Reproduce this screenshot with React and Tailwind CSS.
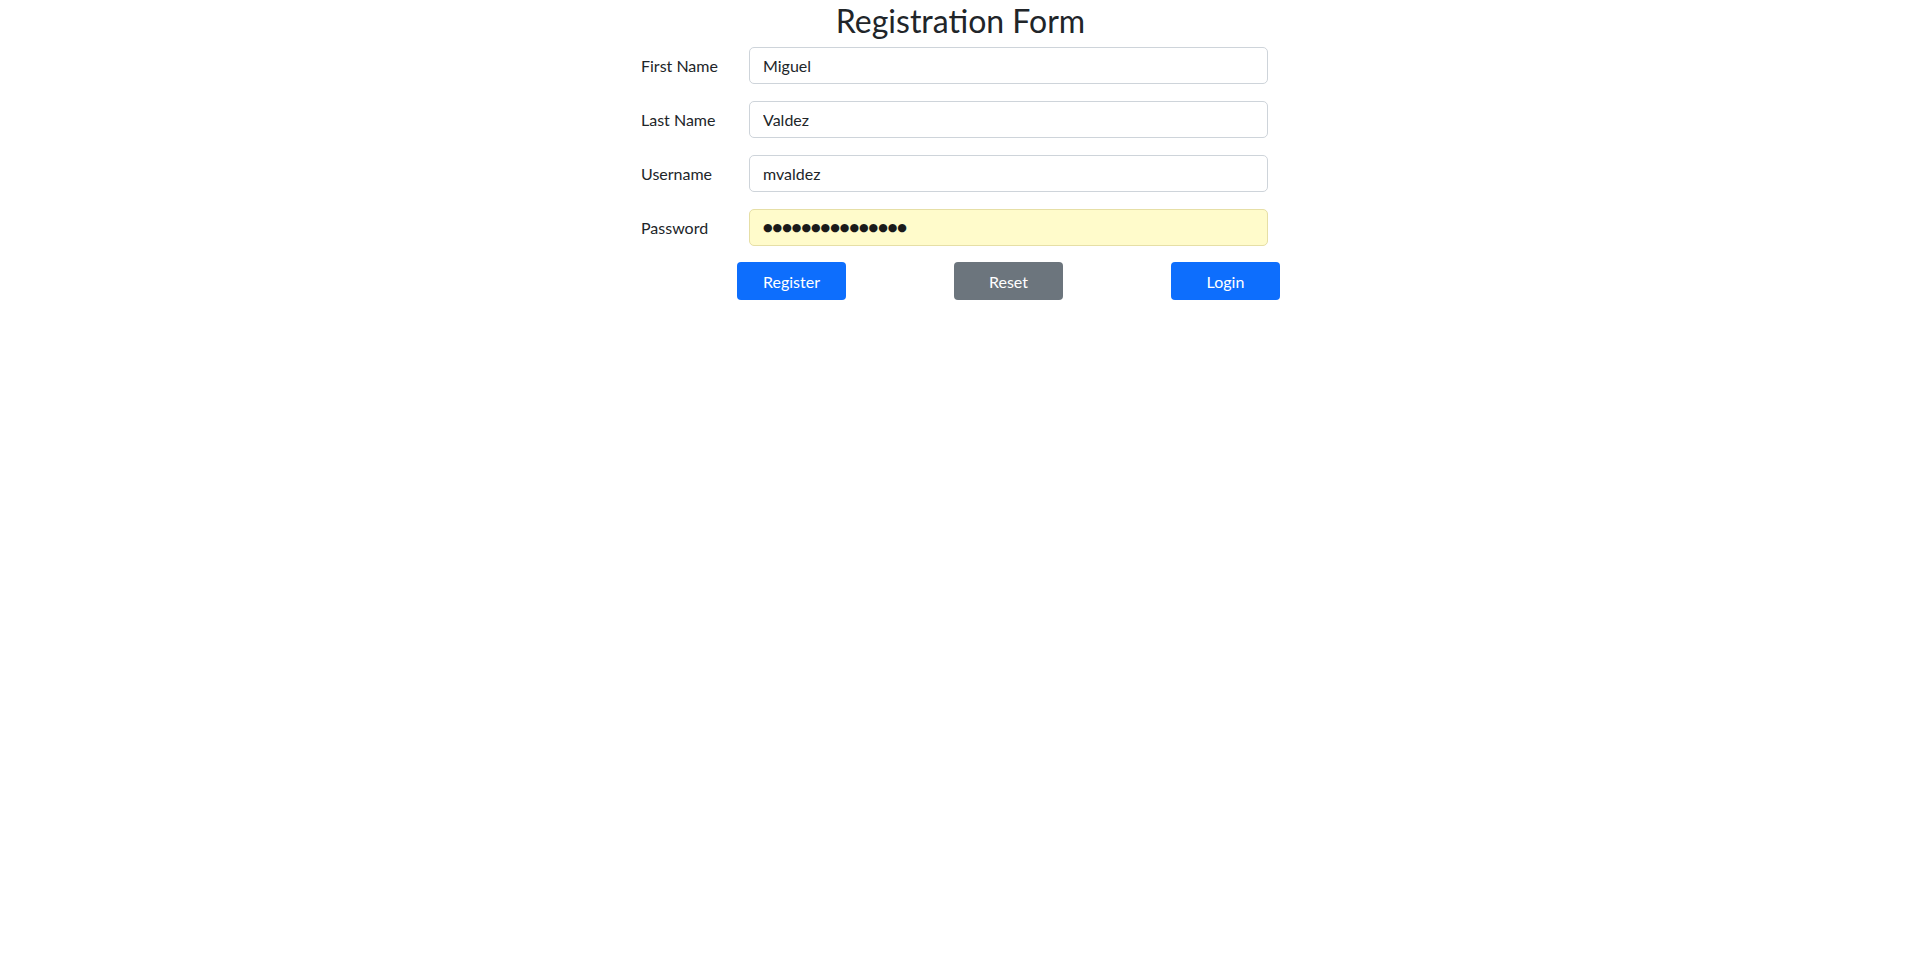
import React, { useState } from "react";

const label = "w-[108px] shrink-0 text-[16px] text-[#212529]";
const input =
  "h-[37px] w-[519px] rounded-[5px] border border-[#ced4da] bg-white px-[13px] text-[16px] text-[#212529] outline-none";
const btn = "h-[38px] w-[109px] rounded-[4px] text-[16px] text-white pt-[1px]";

export default function App() {
  const [form, setForm] = useState({
    first: "Miguel",
    last: "Valdez",
    user: "mvaldez",
    pass: "secretpassword1",
  });

  const onChange = (e) =>
    setForm((f) => ({ ...f, [e.target.name]: e.target.value }));

  const rows = [
    { name: "first", text: "First Name" },
    { name: "last", text: "Last Name" },
    { name: "user", text: "Username" },
  ];

  return (
    <div className="min-h-screen bg-white flex justify-center pr-[11px] font-['Lato','Noto_Sans',sans-serif]">
      <div className="w-[639px] flex flex-col">
        <h1 className="text-center text-[32px] leading-[38px] text-[#212529] mt-[2px] mb-[7px]">
          Registration Form
        </h1>
        <div className="flex flex-col gap-[17px]">
          {rows.map((r) => (
            <div key={r.name} className="flex items-center">
              <label htmlFor={r.name} className={label}>
                {r.text}
              </label>
              <input
                id={r.name}
                name={r.name}
                className={input}
                value={form[r.name]}
                onChange={onChange}
              />
            </div>
          ))}
          <div className="flex items-center">
            <label htmlFor="pass" className={label}>
              Password
            </label>
            {/* masked display, bullets drawn bigger than the font's own */}
            <input
              id="pass"
              name="pass"
              readOnly
              className="h-[37px] w-[519px] rounded-[5px] border border-[#e6dfa6] bg-[#fffbcb] px-[13px] font-['DejaVu_Sans',sans-serif] text-[11px] text-[#1a1a1a] outline-none"
              value={"●".repeat(form.pass.length)}
            />
          </div>
        </div>
        <div className="ml-[96px] mt-[16px] flex justify-between">
          <button type="button" className={`${btn} bg-[#0d6efd]`}>
            Register
          </button>
          <button type="button" className={`${btn} bg-[#6c757d]`}>
            Reset
          </button>
          <button type="button" className={`${btn} bg-[#0d6efd]`}>
            Login
          </button>
        </div>
      </div>
    </div>
  );
}
